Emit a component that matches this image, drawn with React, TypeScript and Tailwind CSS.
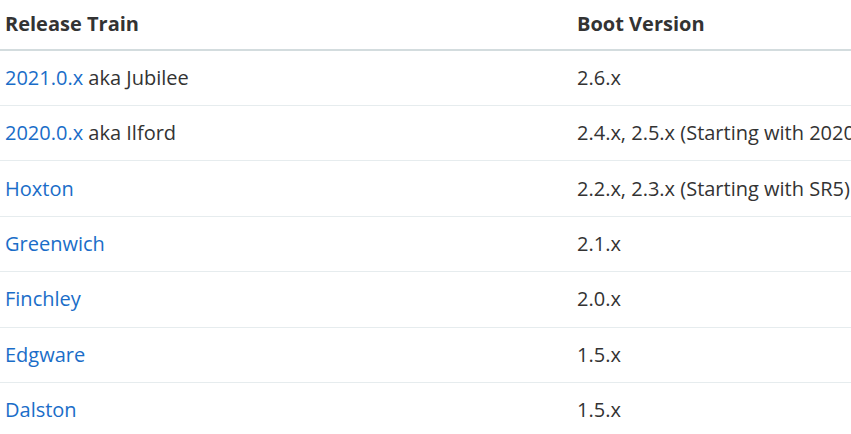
import React from "react";

const rows: { link: string; rest?: string; boot: string }[] = [
  { link: "2021.0.x", rest: " aka Jubilee", boot: "2.6.x" },
  { link: "2020.0.x", rest: " aka Ilford", boot: "2.4.x, 2.5.x (Starting with 2020.0.3)" },
  { link: "Hoxton", boot: "2.2.x, 2.3.x (Starting with SR5)" },
  { link: "Greenwich", boot: "2.1.x" },
  { link: "Finchley", boot: "2.0.x" },
  { link: "Edgware", boot: "1.5.x" },
  { link: "Dalston", boot: "1.5.x" },
];

export default function App() {
  return (
    <div
      className="w-[851px] h-[434px] overflow-hidden bg-white text-[#333333]"
      style={{ fontFamily: "'Open Sans', sans-serif" }}
    >
      <table className="w-[1100px] border-collapse text-[20px] leading-[28px] table-fixed">
        <colgroup>
          <col className="w-[572px]" />
          <col />
        </colgroup>
        <thead>
          <tr className="border-b-2 border-[#d3dcde] h-[50px]">
            <th className="text-left font-bold px-[5px] pt-[9px] pb-[11px]">Release Train</th>
            <th className="text-left font-bold px-[5px] pt-[9px] pb-[11px]">Boot Version</th>
          </tr>
        </thead>
        <tbody>
          {rows.map((r, i) => (
            <tr key={i} className="border-b border-[#e6ecee] h-[55.4px]">
              <td className="px-[5px] py-[13px] whitespace-nowrap">
                <a className="text-[#1a6dc8]">{r.link}</a>
                {r.rest}
              </td>
              <td className="px-[5px] py-[13px] whitespace-nowrap">{r.boot}</td>
            </tr>
          ))}
        </tbody>
      </table>
    </div>
  );
}
